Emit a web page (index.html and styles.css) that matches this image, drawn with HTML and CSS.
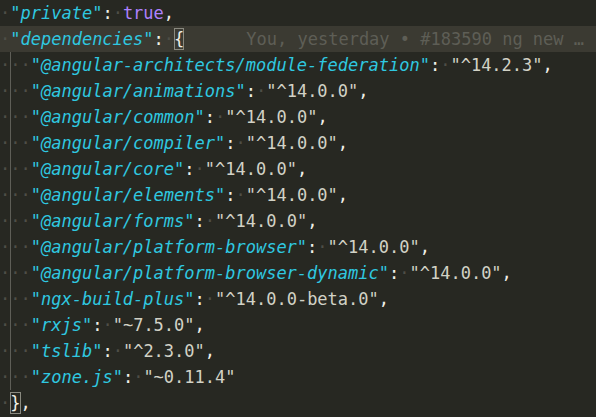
FILE: index.html
```html
<!DOCTYPE html>
<html>
<head>
<meta charset="utf-8">
<link rel="stylesheet" href="styles.css">
</head>
<body>
<div class="editor">
  <div class="line"><span class="ws">·</span><span class="key">"private"</span><span class="p">:</span><span class="ws">·</span><span class="bool">true</span><span class="p">,</span></div>
  <div class="line current"><span class="ws">·</span><span class="key">"dependencies"</span><span class="p">:</span><span class="ws">·</span><span class="bracket">{</span><span class="blame">You, yesterday • #183590 ng new …</span></div>
  <div class="line"><span class="ws">·</span><span class="ws guide">·</span><span class="ws">·</span><span class="key">"@angular-architects/module-federation"</span><span class="p">:</span><span class="ws">·</span><span class="str">"^14.2.3"</span><span class="p">,</span></div>
  <div class="line"><span class="ws">·</span><span class="ws guide">·</span><span class="ws">·</span><span class="key">"@angular/animations"</span><span class="p">:</span><span class="ws">·</span><span class="str">"^14.0.0"</span><span class="p">,</span></div>
  <div class="line"><span class="ws">·</span><span class="ws guide">·</span><span class="ws">·</span><span class="key">"@angular/common"</span><span class="p">:</span><span class="ws">·</span><span class="str">"^14.0.0"</span><span class="p">,</span></div>
  <div class="line"><span class="ws">·</span><span class="ws guide">·</span><span class="ws">·</span><span class="key">"@angular/compiler"</span><span class="p">:</span><span class="ws">·</span><span class="str">"^14.0.0"</span><span class="p">,</span></div>
  <div class="line"><span class="ws">·</span><span class="ws guide">·</span><span class="ws">·</span><span class="key">"@angular/core"</span><span class="p">:</span><span class="ws">·</span><span class="str">"^14.0.0"</span><span class="p">,</span></div>
  <div class="line"><span class="ws">·</span><span class="ws guide">·</span><span class="ws">·</span><span class="key">"@angular/elements"</span><span class="p">:</span><span class="ws">·</span><span class="str">"^14.0.0"</span><span class="p">,</span></div>
  <div class="line"><span class="ws">·</span><span class="ws guide">·</span><span class="ws">·</span><span class="key">"@angular/forms"</span><span class="p">:</span><span class="ws">·</span><span class="str">"^14.0.0"</span><span class="p">,</span></div>
  <div class="line"><span class="ws">·</span><span class="ws guide">·</span><span class="ws">·</span><span class="key">"@angular/platform-browser"</span><span class="p">:</span><span class="ws">·</span><span class="str">"^14.0.0"</span><span class="p">,</span></div>
  <div class="line"><span class="ws">·</span><span class="ws guide">·</span><span class="ws">·</span><span class="key">"@angular/platform-browser-dynamic"</span><span class="p">:</span><span class="ws">·</span><span class="str">"^14.0.0"</span><span class="p">,</span></div>
  <div class="line"><span class="ws">·</span><span class="ws guide">·</span><span class="ws">·</span><span class="key">"ngx-build-plus"</span><span class="p">:</span><span class="ws">·</span><span class="str">"^14.0.0-beta.0"</span><span class="p">,</span></div>
  <div class="line"><span class="ws">·</span><span class="ws guide">·</span><span class="ws">·</span><span class="key">"rxjs"</span><span class="p">:</span><span class="ws">·</span><span class="str">"~7.5.0"</span><span class="p">,</span></div>
  <div class="line"><span class="ws">·</span><span class="ws guide">·</span><span class="ws">·</span><span class="key">"tslib"</span><span class="p">:</span><span class="ws">·</span><span class="str">"^2.3.0"</span><span class="p">,</span></div>
  <div class="line"><span class="ws">·</span><span class="ws guide">·</span><span class="ws">·</span><span class="key">"zone.js"</span><span class="p">:</span><span class="ws">·</span><span class="str">"~0.11.4"</span></div>
  <div class="line"><span class="ws">·</span><span class="bracket">}</span><span class="p">,</span></div>
</div>
</body>
</html>
```
FILE: styles.css
```css
html, body {
  margin: 0;
  padding: 0;
  background: #272822;
  height: 100%;
  overflow: hidden;
}

.editor {
  font-family: "DejaVu Sans Mono", monospace;
  font-size: 17px;
  color: #f8f8f2;
  padding-top: 0;
}

.line {
  display: flex;
  height: 26px;
  line-height: 26px;
  white-space: pre;
}

.current {
  background: #3b3a32;
}

.ws {
  color: #4e4e47;
}

.guide {
  box-shadow: inset 1px 0 0 #5e5e57;
}

.key {
  color: #2fc8e0;
  font-style: italic;
}

.p {
  color: #f0f0e8;
}

.bool {
  color: #ae81ff;
}

.str {
  color: #d2d2c6;
}

.bracket {
  color: #f0f0e8;
  margin: 2px 0;
  line-height: 22px;
  box-shadow: inset 0 0 0 1px #8a8a80;
}

.blame {
  color: #5e5e56;
  margin-left: 62px;
}
```
